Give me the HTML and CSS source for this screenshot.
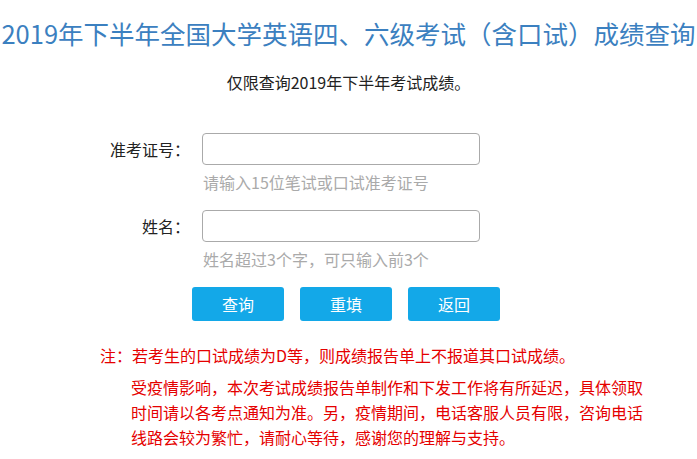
FILE: index.html
```html
<!DOCTYPE html>
<html lang="zh-CN">
<head>
    <meta charset="UTF-8">
    <title>成绩查询</title>
    <link rel="stylesheet" href="styles.css">
</head>
<body>
    <h1 class="title">2019年下半年全国大学英语四、六级考试（含口试）成绩查询</h1>
    <p class="subtitle">仅限查询2019年下半年考试成绩。</p>

    <div class="form">
        <div class="row">
            <label class="label" for="zkzh">准考证号：</label>
            <input class="input" type="text" id="zkzh">
        </div>
        <div class="hint">请输入15位笔试或口试准考证号</div>

        <div class="row row-next">
            <label class="label" for="xm">姓名：</label>
            <input class="input" type="text" id="xm">
        </div>
        <div class="hint">姓名超过3个字，可只输入前3个</div>
    </div>

    <div class="buttons">
        <button class="btn">查询</button>
        <button class="btn">重填</button>
        <button class="btn">返回</button>
    </div>

    <p class="note">注：若考生的口试成绩为D等，则成绩报告单上不报道其口试成绩。</p>
    <p class="notice">受疫情影响，本次考试成绩报告单制作和下发工作将有所延迟，具体领取时间请以各考点通知为准。另，疫情期间，电话客服人员有限，咨询电话线路会较为繁忙，请耐心等待，感谢您的理解与支持。</p>
</body>
</html>
```

FILE: styles.css
```css
body { margin: 0; font-family: "Noto Sans CJK SC", "Microsoft YaHei", sans-serif; font-size: 16px; color: #333; background: #fff; }
.title { margin: 15px 0 0; font-size: 25.5px; line-height: 36px; font-weight: normal; color: #3b80c0; text-align: center; white-space: nowrap; }
.subtitle { margin: 19px 0 0; line-height: 24px; text-align: center; color: #222; }
.form { margin-top: 39px; padding-left: 80px; }
.row { display: flex; align-items: center; }
.row-next { margin-top: 16px; }
.label { width: 110px; margin-right: 12px; text-align: right; color: #222; }
.input { box-sizing: border-box; width: 278px; height: 32px; border: 1px solid #aaa; border-radius: 4px; padding: 0 8px; font-size: 16px; outline: none; }
.hint { margin: 5px 0 0 123px; line-height: 24px; color: #aaa; }
.buttons { display: flex; gap: 16px; margin-top: 16px; padding-left: 192px; }
.btn { width: 92px; height: 34px; border: none; border-radius: 3px; background: #13a8e8; color: #fff; font-family: inherit; font-size: 16px; cursor: pointer; }
.note { margin: 22px 0 0; padding-left: 100px; line-height: 24px; color: #e50000; }
.notice { width: 520px; margin: 8px 0 0 131px; line-height: 25px; color: #e50000; }
```
